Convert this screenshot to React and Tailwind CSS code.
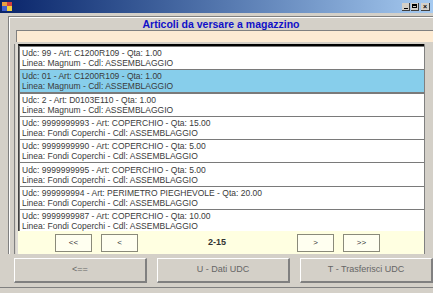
import React from "react";

const rows = [
  ["Udc: 99 - Art: C1200R109 - Qta: 1.00", "Linea: Magnum - Cdl: ASSEMBLAGGIO"],
  ["Udc: 01 - Art: C1200R109 - Qta: 1.00", "Linea: Magnum - Cdl: ASSEMBLAGGIO"],
  ["Udc: 2 - Art: D0103E110 - Qta: 1.00", "Linea: Magnum - Cdl: ASSEMBLAGGIO"],
  ["Udc: 9999999993 - Art: COPERCHIO - Qta: 15.00", "Linea: Fondi Coperchi - Cdl: ASSEMBLAGGIO"],
  ["Udc: 9999999990 - Art: COPERCHIO - Qta: 5.00", "Linea: Fondi Coperchi - Cdl: ASSEMBLAGGIO"],
  ["Udc: 9999999995 - Art: COPERCHIO - Qta: 5.00", "Linea: Fondi Coperchi - Cdl: ASSEMBLAGGIO"],
  ["Udc: 999999994 - Art: PERIMETRO PIEGHEVOLE - Qta: 20.00", "Linea: Fondi Coperchi - Cdl: ASSEMBLAGGIO"],
  ["Udc: 9999999987 - Art: COPERCHIO - Qta: 10.00", "Linea: Fondi Coperchi - Cdl: ASSEMBLAGGIO"],
];

function PagerBtn({ children }) {
  return (
    <div className="w-[37px] h-[18px] bg-[#fffff0] border border-[#8a8a7a] flex items-center justify-center text-[8px] text-[#333]">
      {children}
    </div>
  );
}

function BigBtn({ children, w }) {
  return (
    <div
      className="h-[25px] bg-[#d4d0c8] border-t border-l border-white border-r-2 border-b-2 border-r-[#808080] border-b-[#808080] flex items-center justify-center text-[9px] text-[#666]"
      style={{ width: w }}
    >
      {children}
    </div>
  );
}

export default function App() {
  return (
    <div
      className="w-[433px] h-[293px] bg-[#d4d0c8] overflow-hidden relative"
      style={{ fontFamily: '"Liberation Sans", Arial, sans-serif' }}
    >
      {/* title bar */}
      <div className="h-[13px] bg-gradient-to-r from-[#0a246a] to-[#a6caf0] flex items-center justify-between px-[2px]">
        <div className="w-[10px] h-[9px] flex flex-wrap">
          <div className="w-[5px] h-[4px] bg-[#e8a040]" />
          <div className="w-[5px] h-[4px] bg-[#d04040]" />
          <div className="w-[5px] h-[5px] bg-[#4060d0]" />
          <div className="w-[5px] h-[5px] bg-[#f0d040]" />
        </div>
        <div className="flex items-center gap-[1px] mr-[1px]">
          <div className="w-[8px] h-[8px] bg-[#d4d0c8] border-r border-b border-[#404040] flex items-end justify-center pb-[1px]">
            <div className="w-[4px] h-[1px] bg-black" />
          </div>
          <div className="w-[8px] h-[8px] bg-[#d4d0c8] border-r border-b border-[#404040] flex items-center justify-center">
            <div className="w-[5px] h-[4px] border border-black border-t-2" />
          </div>
          <div className="w-[9px] h-[8px] ml-[1px] bg-[#d4d0c8] border-r border-b border-[#404040] flex items-center justify-center text-[7px] leading-none font-bold text-black">
            ×
          </div>
        </div>
      </div>

      {/* main panel */}
      <div className="mt-[3px] ml-[8px] w-[430px] h-[238px] border-t border-l border-[#808080] flex flex-col">
        <div className="flex-1 flex flex-col border-t border-l border-white">
          <div className="h-[12px] flex items-center justify-center text-[10.5px] font-bold text-[#1010c8] leading-none pr-[6px]">
            Articoli da versare a magazzino
          </div>
          <div className="ml-[6px] h-[12px] bg-[#fdebd3] border-t border-l border-[#808080]" />
          <div className="mt-[2px] ml-[4px] w-[411px] flex-1 flex flex-col border-l border-[#808080] border-r border-r-[#808080]">
            <div className="flex-1 flex flex-col border-l-2 border-[#e0ddd6] ml-[1px]">
              <div className="h-[187px] bg-white border-t-2 border-t-black border-l border-l-[#404040] flex flex-col overflow-hidden">
                {rows.map((r, i) => (
                  <div
                    key={i}
                    className={`h-[23.3px] shrink-0 border-t border-l border-[#7a7a7a] pl-[2px] flex flex-col justify-center text-[8.5px] leading-[10px] text-[#3a3a3a] whitespace-nowrap ${
                      i === 1 ? "bg-[#87ceeb] border-b border-b-[#7a7a7a]" : "bg-white"
                    }`}
                  >
                    <div>{r[0]}</div>
                    <div>{r[1]}</div>
                  </div>
                ))}
              </div>
              <div className="flex-1 bg-[#ffffe1] flex items-center">
                <div className="ml-[37px]"><PagerBtn>&lt;&lt;</PagerBtn></div>
                <div className="ml-[9px]"><PagerBtn>&lt;</PagerBtn></div>
                <div className="ml-[70px] w-[20px] text-[9px] font-bold text-[#333]">2-15</div>
                <div className="ml-[69px]"><PagerBtn>&gt;</PagerBtn></div>
                <div className="ml-[9px]"><PagerBtn>&gt;&gt;</PagerBtn></div>
              </div>
            </div>
          </div>
        </div>
      </div>

      {/* bottom buttons */}
      <div className="mt-[4px] ml-[14px] flex gap-[10px]">
        <BigBtn w={133}>&lt;==</BigBtn>
        <BigBtn w={133}>U - Dati UDC</BigBtn>
        <BigBtn w={133}>T - Trasferisci UDC</BigBtn>
      </div>
      <div className="absolute left-0 right-0 top-[287px] h-[1px] bg-[#808080]" />
    </div>
  );
}
